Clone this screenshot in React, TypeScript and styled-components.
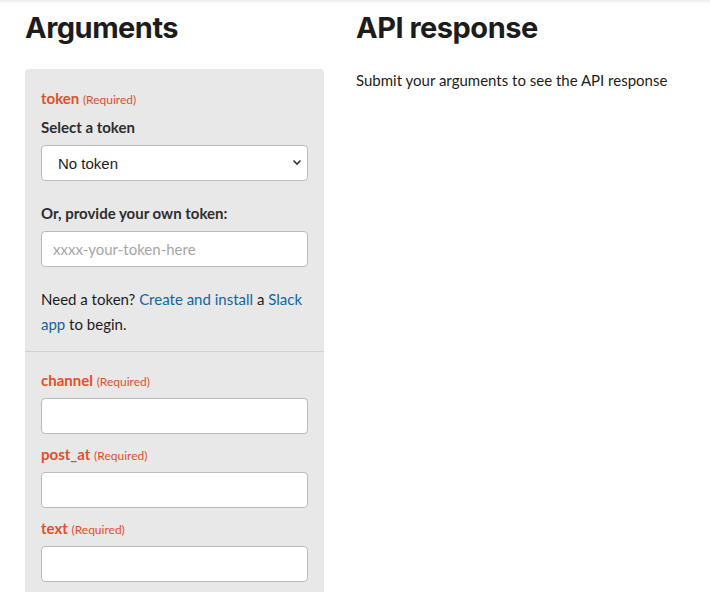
import React from 'react';
import styled, { createGlobalStyle } from 'styled-components';

const GlobalStyle = createGlobalStyle`
  body {
    margin: 0;
    background: #ffffff;
    font-family: Lato, "Open Sans", sans-serif;
    color: #1d1c1d;
  }
`;

const TopShadow = styled.div`
  height: 4px;
  background: linear-gradient(to bottom, #ececec, #ffffff);
`;

const Page = styled.div`
  display: grid;
  grid-template-columns: 299px 1fr;
  column-gap: 32px;
  padding: 0 25px;
`;

const Column = styled.div`
  display: flex;
  flex-direction: column;
`;

const Heading = styled.h2`
  font-family: Inter, "Noto Sans", sans-serif;
  font-weight: 700;
  font-size: 29px;
  letter-spacing: -0.5px;
  line-height: 40px;
  margin: 4px 0 21px;
  color: #1d1c1d;
`;

const Panel = styled.div`
  background: #e8e8e8;
  border-radius: 4px;
`;

const Section = styled.div<{ $divider?: boolean }>`
  padding: ${p => (p.$divider ? '16px 16px 8px' : '17px 16px 14px')};
  border-top: ${p => (p.$divider ? '1px solid #d1d1d1' : 'none')};
`;

const Field = styled.div`
  margin-bottom: 8px;
`;

const ArgName = styled.div`
  height: 24px;
  font-size: 15px;
  font-weight: 700;
  color: #e0502b;
  line-height: 24px;
  margin-bottom: 6px;

  span {
    font-size: 12px;
    font-weight: 400;
    line-height: 1;
  }
`;

const FieldLabel = styled.div<{ $gap?: number }>`
  font-size: 15px;
  font-weight: 700;
  color: #2c2d30;
  line-height: 22px;
  margin: ${p => p.$gap ?? 1}px 0 7px;
`;

const SelectWrap = styled.div`
  position: relative;
`;

const Select = styled.select`
  appearance: none;
  display: block;
  width: 100%;
  height: 36px;
  box-sizing: border-box;
  border: 1px solid #bbbbbb;
  border-radius: 4px;
  background: #ffffff;
  padding: 0 16px;
  font-family: "Liberation Sans", Arial, sans-serif;
  font-size: 15px;
  color: #1d1c1d;
`;

const Chevron = styled.svg`
  position: absolute;
  right: 6px;
  top: 14px;
  pointer-events: none;
`;

const Input = styled.input`
  display: block;
  width: 100%;
  height: 36px;
  box-sizing: border-box;
  border: 1px solid #bbbbbb;
  border-radius: 4px;
  background: #ffffff;
  padding: 0 11px;
  font-family: Lato, sans-serif;
  font-size: 15px;

  &::placeholder {
    color: #a6a6a6;
  }
`;

const Help = styled.p`
  margin: 20px 0 0;
  font-size: 15px;
  line-height: 25px;
  color: #1d1c1d;

  a {
    color: #1264a3;
    text-decoration: none;
  }
`;

const Note = styled.p`
  margin: 0;
  font-size: 15px;
  line-height: 22px;
  color: #1d1c1d;
`;

const args = ['channel', 'post_at', 'text'];

export default function App() {
  return (
    <>
      <GlobalStyle />
      <TopShadow />
      <Page>
        <Column>
          <Heading>Arguments</Heading>
          <Panel>
            <Section>
              <ArgName>
                token <span>(Required)</span>
              </ArgName>
              <FieldLabel>Select a token</FieldLabel>
              <SelectWrap>
                <Select defaultValue="none">
                  <option value="none">No token</option>
                </Select>
                <Chevron width="10" height="7" viewBox="0 0 10 7">
                  <path d="M1.5 1.5 L5 5 L8.5 1.5" fill="none" stroke="#333" strokeWidth="1.6" />
                </Chevron>
              </SelectWrap>
              <FieldLabel $gap={21}>Or, provide your own token:</FieldLabel>
              <Input placeholder="xxxx-your-token-here" />
              <Help>
                Need a token? <a href="#">Create and install</a> a <a href="#">Slack app</a> to begin.
              </Help>
            </Section>
            <Section $divider>
              {args.map(a => (
                <Field key={a}>
                  <ArgName>
                    {a} <span>(Required)</span>
                  </ArgName>
                  <Input />
                </Field>
              ))}
            </Section>
          </Panel>
        </Column>
        <Column>
          <Heading>API response</Heading>
          <Note>Submit your arguments to see the API response</Note>
        </Column>
      </Page>
    </>
  );
}
